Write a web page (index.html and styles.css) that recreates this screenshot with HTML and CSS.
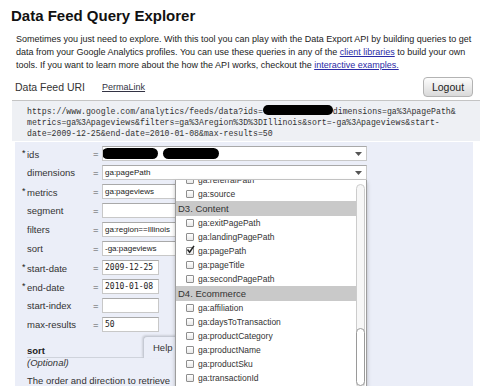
FILE: index.html
```html
<!DOCTYPE html>
<html>
<head>
<meta charset="utf-8">
<title>Data Feed Query Explorer</title>
<link rel="stylesheet" href="styles.css">
</head>
<body>
<h1 class="title">Data Feed Query Explorer</h1>
<p class="intro">Sometimes you just need to explore. With this tool you can play with the Data Export API by building queries to get<br>data from your Google Analytics profiles. You can use these queries in any of the <a href="#">client libraries</a> to build your own<br>tools. If you want to learn more about the how the API works, checkout the <a href="#">interactive examples.</a></p>

<div class="uri-head">
  <span class="uri-title">Data Feed URI</span>
  <a class="permalink" href="#">PermaLink</a>
  <span class="logout">Logout</span>
</div>
<div class="uri-box">https://www.google.com/analytics/feeds/data?ids=<span class="uri-pill"></span>dimensions=ga%3ApagePath&amp;<br>metrics=ga%3Apageviews&amp;filters=ga%3Aregion%3D%3DIllinois&amp;sort=-ga%3Apageviews&amp;start-<br>date=2009-12-25&amp;end-date=2010-01-08&amp;max-results=50</div>

<div class="panel">
  <div class="row"><span class="label"><span class="req">*</span>ids</span><span class="eq">=</span>
    <span class="field wide nopad"><span class="pills"><span class="pill"></span><span class="pill pill2"></span></span><svg class="arrow" width="7" height="4" viewBox="0 0 7 4"><polygon points="0,0 7,0 3.5,4" fill="#555"/></svg></span></div>
  <div class="row"><span class="label">dimensions</span><span class="eq">=</span>
    <span class="field wide"><span>ga:pagePath</span><svg class="arrow" width="7" height="4" viewBox="0 0 7 4"><polygon points="0,0 7,0 3.5,4" fill="#555"/></svg></span></div>
  <div class="row"><span class="label"><span class="req">*</span>metrics</span><span class="eq">=</span><span class="field mid">ga:pageviews</span></div>
  <div class="row"><span class="label">segment</span><span class="eq">=</span><span class="field mid"></span></div>
  <div class="row"><span class="label">filters</span><span class="eq">=</span><span class="field mid">ga:region==Illinois</span></div>
  <div class="row"><span class="label">sort</span><span class="eq">=</span><span class="field mid">-ga:pageviews</span></div>
  <div class="row"><span class="label"><span class="req">*</span>start-date</span><span class="eq">=</span><span class="field short">2009-12-25</span></div>
  <div class="row"><span class="label"><span class="req">*</span>end-date</span><span class="eq">=</span><span class="field short">2010-01-08</span></div>
  <div class="row"><span class="label">start-index</span><span class="eq">=</span><span class="field short"></span></div>
  <div class="row"><span class="label">max-results</span><span class="eq">=</span><span class="field short">50</span></div>

  <div class="help">
    <div class="help-head">
      <span class="help-name">sort</span>
      <span class="help-tab">Help</span>
    </div>
    <div class="help-opt">(Optional)</div>
    <div class="help-desc">The order and direction to retrieve</div>
  </div>

  <div class="dropdown">
    <div class="dd-list">
      <div class="dd-inner">
        <div class="opt"><span class="cb"></span>ga:referralPath</div>
        <div class="opt"><span class="cb"></span>ga:source</div>
        <div class="grp">D3. Content</div>
        <div class="opt"><span class="cb"></span>ga:exitPagePath</div>
        <div class="opt"><span class="cb"></span>ga:landingPagePath</div>
        <div class="opt"><span class="cb checked"><svg width="9" height="9" viewBox="0 0 9 9"><path d="M1.5 4.5 L3.6 7.2 L8 0.8" fill="none" stroke="#222" stroke-width="1.5"/></svg></span>ga:pagePath</div>
        <div class="opt"><span class="cb"></span>ga:pageTitle</div>
        <div class="opt"><span class="cb"></span>ga:secondPagePath</div>
        <div class="grp">D4. Ecommerce</div>
        <div class="opt"><span class="cb"></span>ga:affiliation</div>
        <div class="opt"><span class="cb"></span>ga:daysToTransaction</div>
        <div class="opt"><span class="cb"></span>ga:productCategory</div>
        <div class="opt"><span class="cb"></span>ga:productName</div>
        <div class="opt"><span class="cb"></span>ga:productSku</div>
        <div class="opt"><span class="cb"></span>ga:transactionId</div>
      </div>
    </div>
    <div class="sb"><div class="track"><div class="thumb"></div></div></div>
  </div>
</div>
</body>
</html>
```
FILE: styles.css
```css
html, body {
  margin: 0;
  height: 386px;
  overflow: hidden;
  background: #fff;
}
body {
  font-family: "Liberation Sans", Arial, sans-serif;
  color: #222;
}
.title {
  margin: 0;
  padding: 7px 0 0 11px;
  font-size: 15px;
  line-height: 18px;
  font-weight: bold;
  color: #111;
}
.intro {
  margin: 8px 0 0 16px;
  font-size: 9px;
  line-height: 13px;
  white-space: nowrap;
  color: #222;
}
.intro a {
  color: #2b2ba6;
  text-decoration: underline;
}
.uri-head {
  display: flex;
  align-items: center;
  height: 24px;
  margin-top: 3px;
  padding: 0 7px 0 15px;
}
.uri-title {
  font-size: 10.5px;
  color: #333;
}
.permalink {
  margin-left: 17px;
  font-size: 9px;
  color: #334;
  text-decoration: underline;
}
.logout {
  margin-left: auto;
  width: 50px;
  height: 20px;
  box-sizing: border-box;
  border: 1px solid #b3b3b3;
  border-radius: 4px;
  background: linear-gradient(#fdfdfd, #d9d9d9);
  font-size: 10.5px;
  color: #222;
  display: flex;
  align-items: center;
  justify-content: center;
}
.uri-box {
  margin: 1px 0 0 12px;
  border-top: 1px solid #c4c4c4;
  background: #eef0f4;
  padding: 4px 0 2px 15px;
  font: 8.2px/11px "Liberation Mono", monospace;
  white-space: nowrap;
  color: #333;
}
.uri-pill {
  display: inline-block;
  width: 70px;
  height: 10px;
  background: #000;
  border-radius: 5px;
  vertical-align: -1px;
}
.panel {
  margin: 1px 7px 0 15px;
  padding-top: 2px;
  height: 243px;
  background: #ebeef8;
  position: relative;
}
.row {
  display: flex;
  align-items: center;
  height: 19px;
}
.label {
  width: 66px;
  padding-left: 12px;
  font-size: 9.5px;
  color: #333;
}
.req {
  display: inline-block;
  width: 5px;
  margin-left: -5px;
  font-size: 9px;
  vertical-align: 2px;
  color: #222;
}
.eq {
  width: 9px;
  font-size: 9.5px;
  color: #555;
}
.field {
  height: 15px;
  box-sizing: border-box;
  border: 1px solid #c8c8c8;
  border-top-color: #a9a9a9;
  background: #fff;
  padding-left: 2px;
  font-size: 8px;
  color: #222;
  display: flex;
  align-items: center;
  white-space: nowrap;
  overflow: hidden;
}
.wide {
  width: 265px;
  justify-content: space-between;
  padding-right: 4px;
}
.nopad {
  padding-left: 0;
}
.mid {
  width: 80px;
}
.short {
  width: 57px;
  font-family: "DejaVu Sans Mono", monospace;
  font-size: 8px;
}
.pills {
  display: flex;
  margin-left: -1px;
}
.pill {
  width: 56px;
  height: 11px;
  background: #000;
  border-radius: 6px;
}
.pill2 {
  margin-left: 5px;
}
.arrow {
  display: block;
}
.help {
  margin-top: 3px;
  padding-left: 12px;
}
.help-head {
  display: flex;
  align-items: flex-end;
  width: 152px;
  height: 21px;
}
.help-name {
  flex: 1;
  font-size: 9.5px;
  line-height: 12px;
  font-weight: bold;
  color: #222;
  border-bottom: 1px solid #cfd3dc;
}
.help-tab {
  width: 36px;
  height: 22px;
  box-sizing: border-box;
  border-top: 1px solid #c6cad4;
  border-left: 1px solid #c6cad4;
  border-top-left-radius: 4px;
  box-shadow: -1px -1px 2px rgba(0, 0, 0, 0.12);
  background: #ebeef8;
  padding: 5px 0 0 9px;
  font-size: 9.5px;
  line-height: 12px;
  color: #333;
}
.help-opt {
  margin-top: -1px;
  font-size: 9.5px;
  line-height: 11px;
  font-style: italic;
  color: #333;
}
.help-desc {
  margin-top: 7px;
  font-size: 9.5px;
  line-height: 11px;
  color: #333;
  white-space: nowrap;
}
.dropdown {
  position: absolute;
  left: 160px;
  top: 38px;
  width: 192px;
  height: 207px;
  box-sizing: border-box;
  border: 1px solid #9d9d9d;
  border-top: none;
  border-bottom: none;
  background: #fff;
  box-shadow: 0 2px 4px rgba(0, 0, 0, 0.25);
  display: flex;
  overflow: hidden;
}
.dd-list {
  flex: 1;
  overflow: hidden;
}
.dd-inner {
  margin-top: -7px;
}
.opt {
  height: 14px;
  display: flex;
  align-items: center;
  padding-left: 10px;
  font-size: 8.5px;
  color: #333;
  white-space: nowrap;
}
.cb {
  width: 8px;
  height: 8px;
  box-sizing: border-box;
  border: 1px solid #8e8e8e;
  border-radius: 1px;
  background: linear-gradient(#ffffff, #e8e8e8);
  margin-right: 4px;
  position: relative;
  flex: none;
}
.cb svg {
  position: absolute;
  left: -1px;
  top: -3px;
}
.grp {
  height: 15px;
  background: #c9c9c9;
  padding-left: 2px;
  font-size: 9.5px;
  color: #333;
  display: flex;
  align-items: center;
}
.sb {
  width: 10px;
  padding-top: 4px;
}
.track {
  width: 9px;
  height: 204px;
  box-sizing: border-box;
  border: 1px solid #cccccc;
  border-radius: 5px;
  background: #f7f7f7;
  padding-top: 143px;
}
.thumb {
  height: 58px;
  margin: 0 -1px;
  box-sizing: border-box;
  border: 1px solid #9a9a9a;
  border-radius: 5px;
  background: #fff;
}
```
